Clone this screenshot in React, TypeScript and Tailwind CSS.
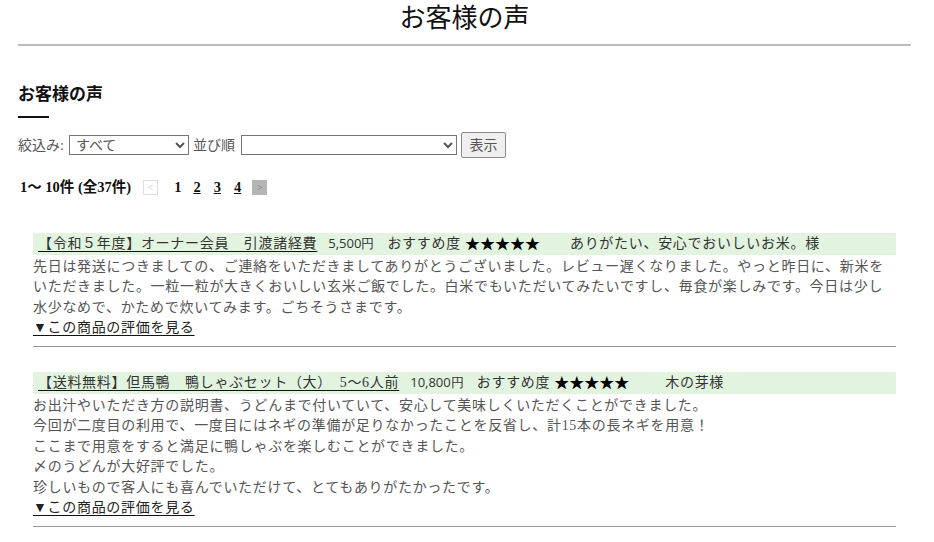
import React from "react";

const serif = "font-['Liberation_Serif','Noto_Sans_CJK_JP',serif]";

type Review = {
  title: string;
  price: string;
  name: string;
  gap: string;
  body: string[];
};

const reviews: Review[] = [
  {
    title: "【令和５年度】オーナー会員　引渡諸経費",
    price: "5,500円",
    name: "ありがたい、安心でおいしいお米。様",
    gap: "ml-[30px]",
    body: [
      "先日は発送につきましての、ご連絡をいただきましてありがとうございました。レビュー遅くなりました。やっと昨日に、新米をいただきました。一粒一粒が大きくおいしい玄米ご飯でした。白米でもいただいてみたいですし、毎食が楽しみです。今日は少し水少なめで、かためで炊いてみます。ごちそうさまです。",
    ],
  },
  {
    title: "【送料無料】但馬鴨　鴨しゃぶセット（大）　5～6人前",
    price: "10,800円",
    name: "木の芽様",
    gap: "ml-[36px]",
    body: [
      "お出汁やいただき方の説明書、うどんまで付いていて、安心して美味しくいただくことができました。",
      "今回が二度目の利用で、一度目にはネギの準備が足りなかったことを反省し、計15本の長ネギを用意！",
      "ここまで用意をすると満足に鴨しゃぶを楽しむことができました。",
      "〆のうどんが大好評でした。",
      "珍しいもので客人にも喜んでいただけて、とてもありがたかったです。",
    ],
  },
];

function ReviewItem({ r }: { r: Review }) {
  return (
    <div className="mx-[15px] mb-[25px] border-b border-[#999] pb-[7px]">
      <div className="flex h-[22px] items-center bg-[#e2f3df] pl-[5px] text-[14px] tracking-[0.05em] text-[#333] whitespace-nowrap">
        <span className="underline decoration-[#111] underline-offset-[3px]">{r.title}</span>
        <span className="ml-[11px] font-['Open_Sans',sans-serif] text-[13px] tracking-normal text-[#333]">
          {r.price}
        </span>
        <span className="ml-[13px]">おすすめ度</span>
        <span className="ml-[4px] text-[15px] tracking-normal text-black">★★★★★</span>
        <span className={r.gap}>{r.name}</span>
      </div>
      <div className="mt-[2px] text-[14px] leading-[20.5px] tracking-[0.05em] text-[#555]">
        {r.body.map((l, i) => (
          <p key={i}>{l}</p>
        ))}
        <a className="text-[#222] underline decoration-[#111] underline-offset-[3px]" href="#">
          ▼この商品の評価を見る
        </a>
      </div>
    </div>
  );
}

export default function App() {
  return (
    <div className={`${serif} w-[934px] bg-white px-[18px] pr-[23px]`}>
      <h1 className="pt-[2px] text-center text-[26px] leading-[33px] text-[#111]">お客様の声</h1>
      <div className="mt-[9px] h-[2px] bg-[#bcbcbc]" />

      <h2 className="mt-[38px] text-[17px] font-bold leading-[22px] text-[#111]">お客様の声</h2>
      <div className="mt-[10px] h-[2px] w-[31px] bg-[#111]" />

      <div className="mt-[14px] flex items-center text-[14px] text-[#555]">
        <span>絞込み:</span>
        <select className="ml-[5px] h-[20px] w-[120px] border border-[#767676] bg-white px-[2px] text-[14px] text-[#555]">
          <option>すべて</option>
        </select>
        <span className="ml-[4px]">並び順</span>
        <select className="ml-[6px] h-[20px] w-[216px] border border-[#767676] bg-white text-[14px]">
          <option></option>
        </select>
        <button className="ml-[4px] h-[26px] w-[45px] rounded-[2px] border border-[#888] bg-[#efefef] text-[14px] text-[#555]">
          表示
        </button>
      </div>

      <div className="mt-[19px] flex items-center pl-[2px] text-[14.5px] font-bold text-[#111]">
        <span>1～ 10件 (全37件)</span>
        <span className="ml-[12px] flex h-[15px] w-[15px] items-center justify-center border border-[#ddd] text-[10px] font-normal text-[#bbb]">
          &lt;
        </span>
        <span className="ml-[16px]">1</span>
        <span className="ml-[12px] underline">2</span>
        <span className="ml-[13px] underline">3</span>
        <span className="ml-[13px] underline">4</span>
        <span className="ml-[11px] flex h-[15px] w-[15px] items-center justify-center bg-[#b5b5b5] text-[10px] font-normal text-[#777]">
          &gt;
        </span>
      </div>

      <div className="mt-[34px]">
        {reviews.map((r, i) => (
          <ReviewItem key={i} r={r} />
        ))}
      </div>
    </div>
  );
}
